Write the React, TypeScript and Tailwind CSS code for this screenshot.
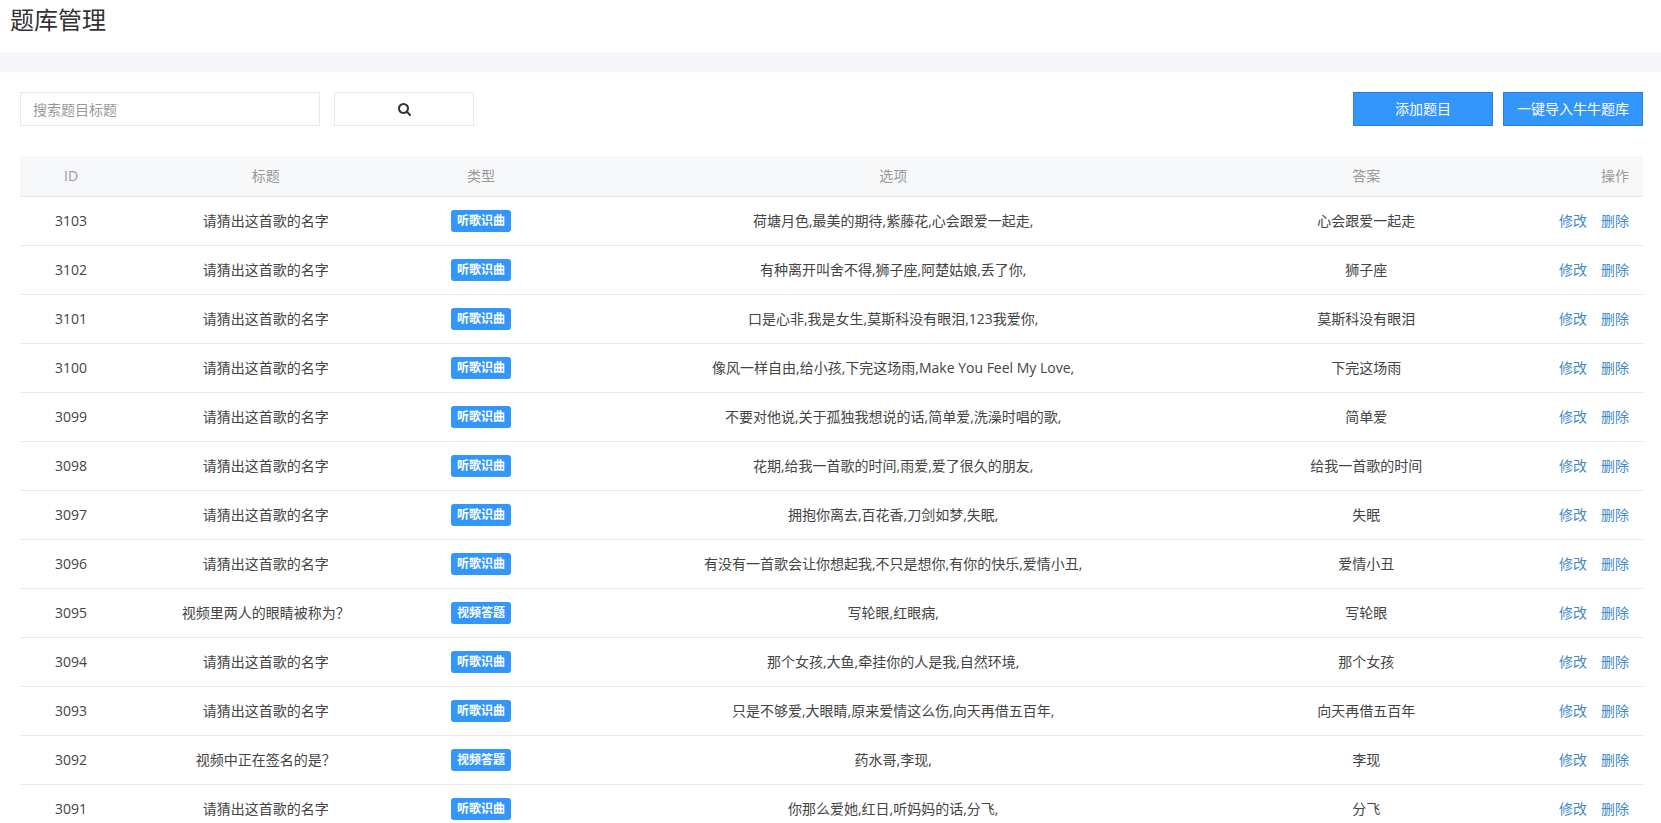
type Question = {
  id: number;
  title: string;
  type: string;
  options: string;
  answer: string;
};

const SONG_TITLE = "请猜出这首歌的名字";
const SONG = "听歌识曲";
const VIDEO = "视频答题";

const questions: Question[] = [
  { id: 3103, title: SONG_TITLE, type: SONG, options: "荷塘月色,最美的期待,紫藤花,心会跟爱一起走,", answer: "心会跟爱一起走" },
  { id: 3102, title: SONG_TITLE, type: SONG, options: "有种离开叫舍不得,狮子座,阿楚姑娘,丢了你,", answer: "狮子座" },
  { id: 3101, title: SONG_TITLE, type: SONG, options: "口是心非,我是女生,莫斯科没有眼泪,123我爱你,", answer: "莫斯科没有眼泪" },
  { id: 3100, title: SONG_TITLE, type: SONG, options: "像风一样自由,给小孩,下完这场雨,Make You Feel My Love,", answer: "下完这场雨" },
  { id: 3099, title: SONG_TITLE, type: SONG, options: "不要对他说,关于孤独我想说的话,简单爱,洗澡时唱的歌,", answer: "简单爱" },
  { id: 3098, title: SONG_TITLE, type: SONG, options: "花期,给我一首歌的时间,雨爱,爱了很久的朋友,", answer: "给我一首歌的时间" },
  { id: 3097, title: SONG_TITLE, type: SONG, options: "拥抱你离去,百花香,刀剑如梦,失眠,", answer: "失眠" },
  { id: 3096, title: SONG_TITLE, type: SONG, options: "有没有一首歌会让你想起我,不只是想你,有你的快乐,爱情小丑,", answer: "爱情小丑" },
  { id: 3095, title: "视频里两人的眼睛被称为？", type: VIDEO, options: "写轮眼,红眼病,", answer: "写轮眼" },
  { id: 3094, title: SONG_TITLE, type: SONG, options: "那个女孩,大鱼,牵挂你的人是我,自然环境,", answer: "那个女孩" },
  { id: 3093, title: SONG_TITLE, type: SONG, options: "只是不够爱,大眼睛,原来爱情这么伤,向天再借五百年,", answer: "向天再借五百年" },
  { id: 3092, title: "视频中正在签名的是？", type: VIDEO, options: "药水哥,李现,", answer: "李现" },
  { id: 3091, title: SONG_TITLE, type: SONG, options: "你那么爱她,红日,听妈妈的话,分飞,", answer: "分飞" },
];

function SearchIcon() {
  return (
    <svg viewBox="0 0 1664 1792" className="h-3.5 w-[13px]" fill="currentColor" aria-hidden="true">
      <path d="M1152 832q0-185-131.5-316.5t-316.5-131.5-316.5 131.5-131.5 316.5 131.5 316.5 316.5 131.5 316.5-131.5 131.5-316.5zm512 832q0 52-38 90t-90 38q-54 0-90-38l-343-342q-179 124-399 124-143 0-273.5-55.5t-225-150-150-225-55.5-273.5 55.5-273.5 150-225 225-150 273.5-55.5 273.5 55.5 225 150 150 225 55.5 273.5q0 220-124 399l343 343q37 37 37 90z" />
    </svg>
  );
}

function PrimaryButton({ children }: { children: string }) {
  return (
    <button
      type="button"
      className="h-[34px] w-[140px] border border-[#2a80d8] bg-[#3296fa] text-sm whitespace-nowrap text-white"
    >
      {children}
    </button>
  );
}

function QuestionRow({ question }: { question: Question }) {
  return (
    <tr className="h-[49px] border-b border-[#e7e8eb]">
      <td>{question.id}</td>
      <td>{question.title}</td>
      <td>
        <span className="inline-block rounded-[3px] bg-[#3296fa] px-1.5 text-xs leading-[22px] font-bold text-white">
          {question.type}
        </span>
      </td>
      <td>{question.options}</td>
      <td>{question.answer}</td>
      <td className="pr-3.5">
        <div className="flex justify-end gap-3.5 text-[#428bca]">
          <a href="#edit">修改</a>
          <a href="#delete">删除</a>
        </div>
      </td>
    </tr>
  );
}

export default function App() {
  return (
    <div className="h-screen overflow-hidden bg-white font-['Open_Sans','Noto_Sans_CJK_SC',sans-serif] text-sm text-[#444]">
      <header className="h-[52px] px-2.5">
        <h1 className="text-2xl leading-10 text-[#333]">题库管理</h1>
      </header>
      <div className="h-5 bg-[#f6f7fa]" />
      <main className="pt-5 pr-[18px] pl-5">
        <div className="mb-[30px] flex items-center justify-between">
          <form className="flex gap-3.5" onSubmit={(event) => event.preventDefault()}>
            <input
              type="text"
              aria-label="搜索题目标题"
              placeholder="搜索题目标题"
              className="h-[34px] w-[300px] border border-[#e7e8eb] px-3 placeholder:text-[#999]"
            />
            <button
              type="submit"
              aria-label="搜索"
              className="flex h-[34px] w-[140px] items-center justify-center border border-[#e7e8eb] text-[#333]"
            >
              <SearchIcon />
            </button>
          </form>
          <div className="flex gap-2.5">
            <PrimaryButton>添加题目</PrimaryButton>
            <PrimaryButton>一键导入牛牛题库</PrimaryButton>
          </div>
        </div>
        <table className="w-full table-fixed border-collapse text-center">
          <colgroup>
            <col className="w-[6.3%]" />
            <col className="w-[17.7%]" />
            <col className="w-[8.8%]" />
            <col className="w-[42%]" />
            <col className="w-[16.3%]" />
            <col className="w-[8.9%]" />
          </colgroup>
          <thead>
            <tr className="h-10 border-b border-[#e3e5e9] bg-[#f7f8fa] text-[#999] [&>th]:font-normal">
              <th>ID</th>
              <th>标题</th>
              <th>类型</th>
              <th>选项</th>
              <th>答案</th>
              <th className="pr-3.5 text-right">操作</th>
            </tr>
          </thead>
          <tbody>
            {questions.map((question) => (
              <QuestionRow key={question.id} question={question} />
            ))}
          </tbody>
        </table>
      </main>
    </div>
  );
}
